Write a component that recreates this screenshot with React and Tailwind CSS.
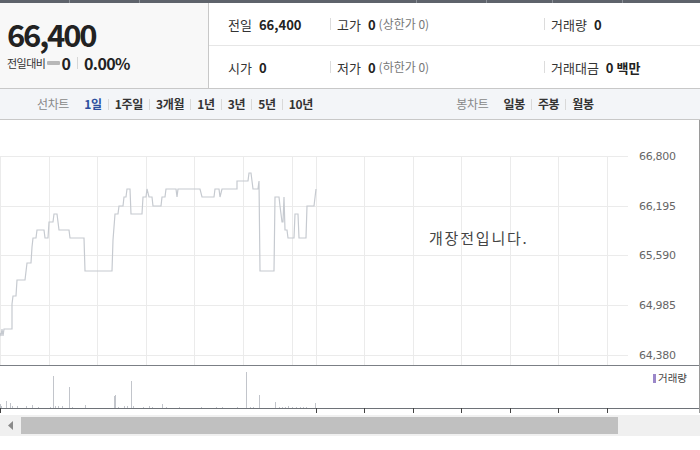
import React from 'react';

const PRICE = [
  [0,333],[1,336],[2,329],[3,336],[4,329],[12,329],[12,304],[13,296],[16,296],[17,280],[25,280],[27,263],[31,263],[32,247],[33,238],[36,238],[37,230],[44,230],[45,238],[48,238],[49,222],[53,222],[54,214],[57,214],[59,230],[69,230],[70,238],[84,238],[85,271],[112,271],[113,240],[115,214],[118,214],[119,206],[123,206],[124,197],[126,197],[127,189],[130,189],[131,214],[142,214],[143,197],[146,197],[147,189],[149,197],[152,197],[153,206],[161,206],[162,197],[165,197],[166,189],[176,189],[177,197],[178,189],[200,189],[202,197],[214,197],[215,189],[219,189],[220,197],[222,189],[237,189],[237,181],[248,181],[249,173],[251,173],[252,181],[253,189],[258,189],[259,181],[260,271],[274,271],[275,197],[279,197],[280,206],[282,222],[283,222],[284,197],[285,230],[287,230],[288,238],[294,238],[295,214],[298,214],[299,238],[306,238],[307,206],[314,206],[316,189],
];

// [x, height] volume bars, baseline y=408
const VOLUME = [
  [0,4],[1,2],[6,7],[10,5],[12,2],[17,2],[26,2],[32,3],[38,1],[50,1],[53,32],[55,2],[58,2],[62,2],[69,21],[72,1],[85,3],[114,12],[115,13],[118,1],[124,2],[127,2],[131,27],[133,2],[143,1],[149,2],[152,1],[162,4],[166,1],[179,1],[201,1],[216,1],[222,1],[237,1],[246,36],[250,1],[253,1],[259,13],[275,6],[279,1],[282,1],[285,1],[288,2],[292,1],[296,1],[300,1],[303,1],[306,1],[315,5],
];

const H_LINES = [156, 206, 255, 305, 355];
const V_LINES = [49, 97, 146, 194, 243, 292, 316, 364, 413, 461, 510, 558, 607];
const TICKS = [0, 316, 364, 413, 461, 510, 558, 607];
const Y_LABELS = ['66,800', '66,195', '65,590', '64,985', '64,380'];

const Sep = () => <span className="inline-block w-px h-[11px] bg-[#d9d9d9] mx-[6px]" />;

function InfoCell({ label, value, extra, first, className }) {
  return (
    <div className={'flex items-center text-[13px] ' + className}>
      {!first && <span className="inline-block w-px h-[12px] bg-[#dcdcdc] mr-[6px]" />}
      <span className="text-[#333]">{label}</span>
      <span className="ml-[7px] font-bold text-[#222]">{value}</span>
      {extra && <span className="ml-[3px] text-[12px] text-[#777]">{extra}</span>}
    </div>
  );
}

function Chart() {
  const pts = PRICE.map(([x, y]) => `${x},${y - 120}`).join(' ');
  return (
    <div className="relative h-[295px]">
      <svg width="700" height="295" className="block">
        {H_LINES.map(y => (
          <line key={y} x1="0" x2="628" y1={y - 120 + 0.5} y2={y - 120 + 0.5} stroke="#ebebeb" />
        ))}
        <line x1="0.5" x2="0.5" y1="36" y2="245" stroke="#ebebeb" />
        {V_LINES.map(x => (
          <line key={x} x1={x + 0.5} x2={x + 0.5} y1="36" y2="288" stroke="#ebebeb" />
        ))}
        <polyline points={pts} fill="none" stroke="#c6cad0" strokeWidth="1.2" />
        {Y_LABELS.map((t, i) => (
          <text key={t} x="639" y={H_LINES[i] - 120 + 4} fontSize="11" fill="#666" fontFamily="'DejaVu Sans', sans-serif" letterSpacing="-0.3">{t}</text>
        ))}
        <line x1="0" x2="700" y1="245.5" y2="245.5" stroke="#7b7f85" />
        <rect x="0" y="246" width="699" height="42" fill="#fff" />
        {VOLUME.map(([x, h], i) => (
          <rect key={i} x={x} y={288 - h} width="1" height={h} fill="#c2c5cb" />
        ))}
        <line x1="0" x2="700" y1="288.5" y2="288.5" stroke="#6e7278" />
        {TICKS.map(x => (
          <line key={x} x1={x + 0.5} x2={x + 0.5} y1="288" y2="293" stroke="#444" />
        ))}
        <line x1="699.5" x2="699.5" y1="0" y2="293" stroke="#9a9a9a" />
        <rect x="653" y="254" width="3" height="9" fill="#9b87c9" />
        <text x="658" y="262" fontSize="10.5" fill="#444" fontFamily="'Noto Sans CJK KR', sans-serif">거래량</text>
      </svg>
      <div className="absolute left-[429px] top-[110px] text-[15px] text-[#444] tracking-[1.8px]">개장전입니다.</div>
    </div>
  );
}

export default function App() {
  return (
    <div className="w-[700px] h-[450px] bg-white overflow-hidden font-['Noto_Sans_CJK_KR',sans-serif] leading-none">
      {/* top strip */}
      <div className="h-[3px] bg-[#5e636b] flex">
        <div className="w-[70px] border-r border-[#8a8f96]" />
        <div className="w-[70px] border-r border-[#8a8f96]" />
        <div className="w-[277px] border-r border-[#8a8f96]" />
        <div className="w-[70px] border-r border-[#8a8f96]" />
        <div className="w-[66px] border-r border-[#8a8f96]" />
        <div className="w-[70px] border-r border-[#8a8f96]" />
      </div>

      {/* price summary */}
      <div className="flex h-[86px] border-b border-[#c8c8c8]">
        <div className="w-[209px] bg-[#f8f8f8] border-r border-[#c8c8c8] pl-[7px] pt-[16px]">
          <div className="h-[30px] text-[31px] font-bold text-[#222] tracking-[-2.2px] leading-[30px]">66,400</div>
          <div className="flex items-center h-[18px] mt-[5px]">
            <span className="text-[11px] text-[#333] tracking-[-0.5px]">전일대비</span>
            <span className="inline-block w-[13px] h-[4px] bg-[#b8b8b8] ml-[2px] mr-[1px] rounded-[1px]" />
            <span className="text-[16px] font-bold text-[#222]">0</span>
            <span className="inline-block w-px h-[12px] bg-[#d6d6d6] mx-[6px]" />
            <span className="text-[16px] font-bold text-[#222] tracking-[-0.6px]">0.00%</span>
          </div>
        </div>
        <div className="flex-1 flex flex-col">
          <div className="flex h-[43px] border-b border-[#e6e6e6] pl-[19px]">
            <InfoCell first label="전일" value="66,400" className="w-[102px]" />
            <InfoCell label="고가" value="0" extra="(상한가 0)" className="w-[214px]" />
            <InfoCell label="거래량" value="0" />
          </div>
          <div className="flex flex-1 pl-[19px]">
            <InfoCell first label="시가" value="0" className="w-[102px]" />
            <InfoCell label="저가" value="0" extra="(하한가 0)" className="w-[214px]" />
            <InfoCell label="거래대금" value="0 백만" />
          </div>
        </div>
      </div>

      {/* chart type tabs */}
      <div className="flex h-[31px] bg-[#f3f5f8] border-b border-[#c8c8c8] text-[12px] tracking-[-0.3px]">
        <div className="w-[350px] flex items-center justify-center">
          <span className="text-[#888] mr-[15px]">선차트</span>
          <span className="font-bold text-[#2b4f9e]">1일</span><Sep />
          <span className="font-bold text-[#333]">1주일</span><Sep />
          <span className="font-bold text-[#333]">3개월</span><Sep />
          <span className="font-bold text-[#333]">1년</span><Sep />
          <span className="font-bold text-[#333]">3년</span><Sep />
          <span className="font-bold text-[#333]">5년</span><Sep />
          <span className="font-bold text-[#333]">10년</span>
        </div>
        <div className="w-[350px] flex items-center justify-center">
          <span className="text-[#888] mr-[15px]">봉차트</span>
          <span className="font-bold text-[#333]">일봉</span><Sep />
          <span className="font-bold text-[#333]">주봉</span><Sep />
          <span className="font-bold text-[#333]">월봉</span>
        </div>
      </div>

      <Chart />

      {/* scrollbar */}
      <div className="h-[21px] bg-[#f0f0f0] flex items-center">
        <div className="w-[21px] flex justify-center">
          <svg width="6" height="9" viewBox="0 0 6 9"><path d="M5 0 L0 4.5 L5 9 Z" fill="#8a8a8a" /></svg>
        </div>
        <div className="w-[597px] h-[17px] bg-[#c0c0c0]" />
      </div>
    </div>
  );
}
